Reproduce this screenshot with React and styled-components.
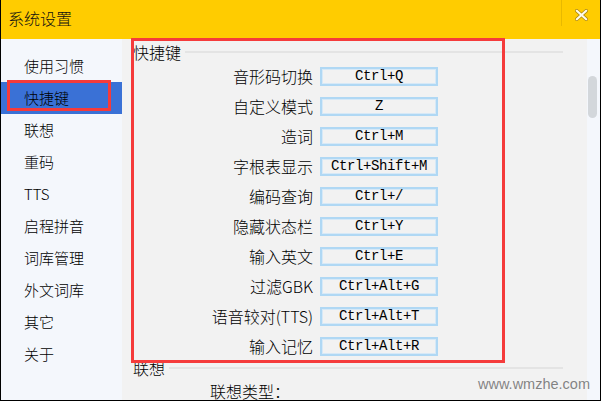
import React from "react";
import styled, { createGlobalStyle } from "styled-components";

const GlobalStyle = createGlobalStyle`
  html, body {
    margin: 0;
    padding: 0;
    background: #fff;
  }
  body {
    font-family: "Noto Sans CJK SC", "Liberation Sans", sans-serif;
    font-weight: 300;
  }
`;

const menuItems = [
  "使用习惯",
  "快捷键",
  "联想",
  "重码",
  "TTS",
  "启程拼音",
  "词库管理",
  "外文词库",
  "其它",
  "关于",
];

const hotkeys = [
  ["音形码切换", "Ctrl+Q"],
  ["自定义模式", "Z"],
  ["造词", "Ctrl+M"],
  ["字根表显示", "Ctrl+Shift+M"],
  ["编码查询", "Ctrl+/"],
  ["隐藏状态栏", "Ctrl+Y"],
  ["输入英文", "Ctrl+E"],
  ["过滤GBK", "Ctrl+Alt+G"],
  ["语音较对(TTS)", "Ctrl+Alt+T"],
  ["输入记忆", "Ctrl+Alt+R"],
];

const App = () => {
  return (
    <>
      <GlobalStyle />
      <Window>
        <TitleBar>
          <Title>系统设置</Title>
          <TitleDivider />
          <CloseButton>
            <svg width="13" height="12" viewBox="0 0 13 12">
              <path
                d="M1.8 1.8 L11.2 10.2 M11.2 1.8 L1.8 10.2"
                stroke="#b08a10"
                strokeWidth="3.6"
                strokeLinecap="round"
              />
              <path
                d="M1.8 1.8 L11.2 10.2 M11.2 1.8 L1.8 10.2"
                stroke="#fffbe8"
                strokeWidth="2.2"
                strokeLinecap="round"
              />
            </svg>
          </CloseButton>
        </TitleBar>
        <Body>
          <Sidebar>
            {menuItems.map((item) => (
              <MenuItem key={item} active={item === "快捷键"}>
                {item}
              </MenuItem>
            ))}
          </Sidebar>
          <Content>
            <GroupHeading>
              <span>快捷键</span>
              <Rule />
            </GroupHeading>
            <KeyList>
              {hotkeys.map(([label, key]) => (
                <KeyRow key={label}>
                  <KeyLabel>{label}</KeyLabel>
                  <KeyBox>{key}</KeyBox>
                </KeyRow>
              ))}
            </KeyList>
            <GroupHeading>
              <span>联想</span>
              <Rule />
            </GroupHeading>
            <OptionRow>联想类型：</OptionRow>
          </Content>
          <ScrollTrack>
            <ScrollThumb />
          </ScrollTrack>
        </Body>
        <MenuMark />
        <PanelMark />
        <Watermark>www.wmzhe.com</Watermark>
      </Window>
    </>
  );
};

const Window = styled.div`
  position: relative;
  width: 601px;
  height: 401px;
  box-sizing: border-box;
  border: 1px solid #000;
  border-top: none;
  display: flex;
  flex-direction: column;
  overflow: hidden;
  background: #f2f2f2;
`;

const TitleBar = styled.div`
  height: 39px;
  flex-shrink: 0;
  background: #ffcc00;
  display: flex;
  align-items: flex-start;
`;

const Title = styled.div`
  flex: 1;
  padding-left: 7px;
  padding-top: 7px;
  font-size: 16px;
  line-height: 22px;
  color: #111;
`;

const TitleDivider = styled.div`
  width: 1px;
  height: 26px;
  background: #e8b900;
`;

const CloseButton = styled.div`
  width: 37px;
  height: 30px;
  display: flex;
  align-items: center;
  justify-content: center;
  padding-left: 1px;
`;

const Body = styled.div`
  flex: 1;
  display: flex;
  min-height: 0;
`;

const Sidebar = styled.div`
  width: 121px;
  flex-shrink: 0;
  background: #f4f7fc;
  padding-top: 11px;
  box-sizing: border-box;
`;

const MenuItem = styled.div`
  height: 32px;
  line-height: 32px;
  padding-left: 23px;
  font-size: 15px;
  color: #000;
  background: ${(p) => (p.active ? "#3a71d6" : "transparent")};
`;

const Content = styled.div`
  flex: 1;
  padding-top: 6px;
  background: #f2f2f2;
  overflow: hidden;
`;

const GroupHeading = styled.div`
  height: 14px;
  line-height: 14px;
  margin-bottom: 2px;
  padding-left: 11px;
  padding-right: 24px;
  display: flex;
  align-items: center;
  gap: 4px;
  font-size: 16px;
  color: #000;
  white-space: nowrap;
`;

const Rule = styled.div`
  flex: 1;
  height: 2px;
  background: #e4e4e4;
`;

const KeyList = styled.div`
  display: flex;
  flex-direction: column;
`;

const KeyRow = styled.div`
  height: 30px;
  display: grid;
  grid-template-columns: 191px 118px;
  column-gap: 7px;
  align-items: center;
`;

const KeyLabel = styled.div`
  text-align: right;
  font-size: 16px;
  line-height: 20px;
  color: #000;
  white-space: nowrap;
`;

const KeyBox = styled.div`
  height: 19px;
  box-sizing: border-box;
  border: 2px solid #b0d8f4;
  box-shadow: inset 0 0 0 1px #d7e9f7;
  display: flex;
  align-items: center;
  justify-content: center;
  font-family: "Liberation Mono", "DejaVu Sans Mono", monospace;
  font-weight: 400;
  font-size: 14px;
  letter-spacing: -0.4px;
  color: #000;
`;

const OptionRow = styled.div`
  height: 30px;
  line-height: 28px;
  padding-left: 88px;
  font-size: 16px;
  color: #000;
`;

const ScrollTrack = styled.div`
  width: 13px;
  flex-shrink: 0;
  background: #f4f7fc;
  padding-top: 37px;
  padding-left: 1px;
  box-sizing: border-box;
`;

const ScrollThumb = styled.div`
  width: 9px;
  height: 42px;
  border-radius: 5px;
  background: #d3d7db;
`;

/* red annotation frames drawn over the menu and the hotkey panel */
const MenuMark = styled.div`
  position: absolute;
  left: 6px;
  top: 80px;
  width: 104px;
  height: 31px;
  box-sizing: border-box;
  border: 3px solid #f53b3b;
  pointer-events: none;
`;

const PanelMark = styled.div`
  position: absolute;
  left: 130px;
  top: 38px;
  width: 374px;
  height: 325px;
  box-sizing: border-box;
  border: 3px solid #f53b3b;
  pointer-events: none;
`;

const Watermark = styled.div`
  position: absolute;
  right: 10px;
  bottom: 8px;
  font-family: "Liberation Sans", Arial, sans-serif;
  font-weight: 400;
  font-size: 14.5px;
  color: rgba(110, 110, 110, 0.85);
  pointer-events: none;
`;

export default App;
